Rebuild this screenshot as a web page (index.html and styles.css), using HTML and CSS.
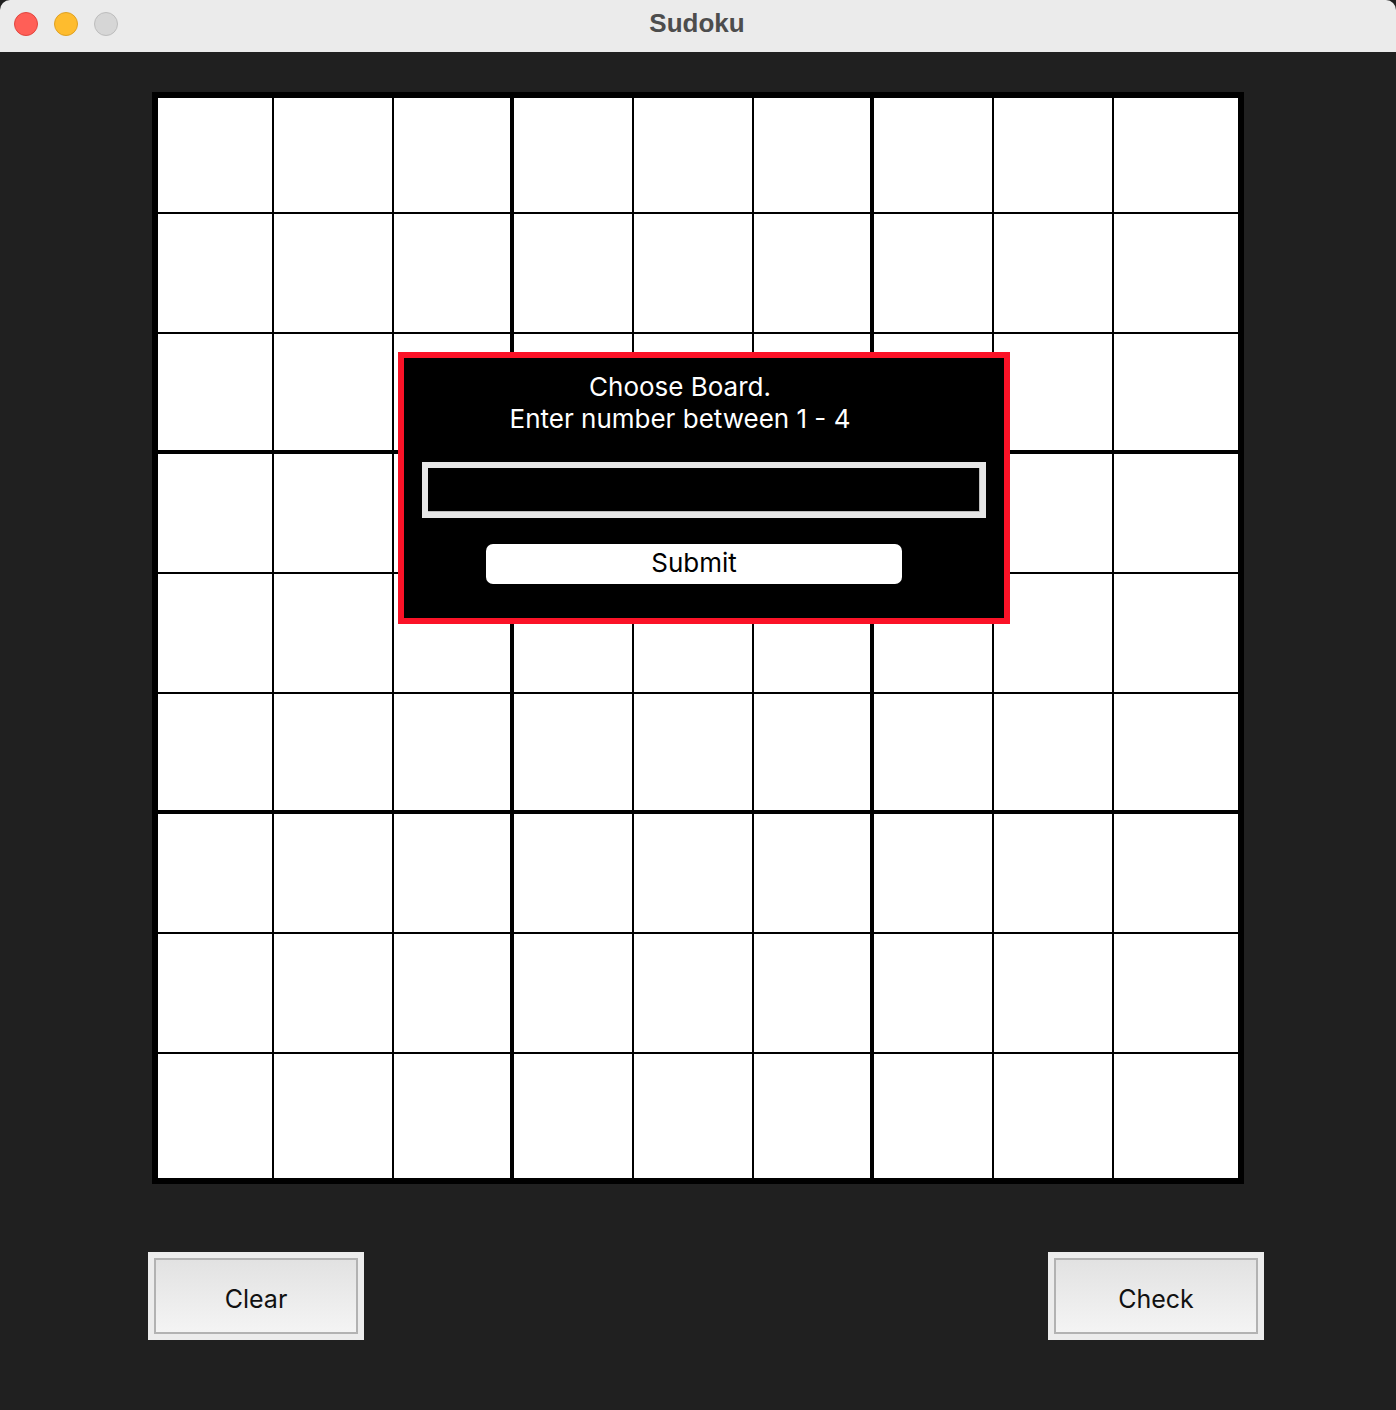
FILE: index.html
```html
<!DOCTYPE html>
<html lang="en">
<head>
<meta charset="utf-8">
<title>Sudoku</title>
<link rel="stylesheet" href="styles.css">
</head>
<body>
<div class="window">
  <header class="titlebar">
    <div class="lights">
      <span class="light red"></span>
      <span class="light yellow"></span>
      <span class="light grey"></span>
    </div>
    <div class="title">Sudoku</div>
    <div class="spacer"></div>
  </header>
  <main class="content">
    <div class="board-wrap">
      <div class="board">
        <div class="cell"></div><div class="cell"></div><div class="cell"></div><div class="cell"></div><div class="cell"></div><div class="cell"></div><div class="cell"></div><div class="cell"></div><div class="cell"></div>
        <div class="cell"></div><div class="cell"></div><div class="cell"></div><div class="cell"></div><div class="cell"></div><div class="cell"></div><div class="cell"></div><div class="cell"></div><div class="cell"></div>
        <div class="cell"></div><div class="cell"></div><div class="cell"></div><div class="cell"></div><div class="cell"></div><div class="cell"></div><div class="cell"></div><div class="cell"></div><div class="cell"></div>
        <div class="cell"></div><div class="cell"></div><div class="cell"></div><div class="cell"></div><div class="cell"></div><div class="cell"></div><div class="cell"></div><div class="cell"></div><div class="cell"></div>
        <div class="cell"></div><div class="cell"></div><div class="cell"></div><div class="cell"></div><div class="cell"></div><div class="cell"></div><div class="cell"></div><div class="cell"></div><div class="cell"></div>
        <div class="cell"></div><div class="cell"></div><div class="cell"></div><div class="cell"></div><div class="cell"></div><div class="cell"></div><div class="cell"></div><div class="cell"></div><div class="cell"></div>
        <div class="cell"></div><div class="cell"></div><div class="cell"></div><div class="cell"></div><div class="cell"></div><div class="cell"></div><div class="cell"></div><div class="cell"></div><div class="cell"></div>
        <div class="cell"></div><div class="cell"></div><div class="cell"></div><div class="cell"></div><div class="cell"></div><div class="cell"></div><div class="cell"></div><div class="cell"></div><div class="cell"></div>
        <div class="cell"></div><div class="cell"></div><div class="cell"></div><div class="cell"></div><div class="cell"></div><div class="cell"></div><div class="cell"></div><div class="cell"></div><div class="cell"></div>
      </div>
      <div class="dialog">
        <div class="dialog-text">Choose Board.<br>Enter number between 1 - 4</div>
        <div class="dialog-input"></div>
        <button class="submit">Submit</button>
      </div>
    </div>
    <div class="actions">
      <div class="btn-frame"><button class="btn">Clear</button></div>
      <div class="btn-frame"><button class="btn">Check</button></div>
    </div>
  </main>
</div>
</body>
</html>
```

FILE: styles.css
```css
* { box-sizing: border-box; }
html, body {
  margin: 0;
  padding: 0;
  background: #202020;
}
body {
  font-family: "Inter", "Liberation Sans", sans-serif;
}
.window {
  width: 1396px;
  min-height: 1410px;
  background: #202020;
}
.titlebar {
  height: 52px;
  background: #ebebeb;
  border-top-left-radius: 10px;
  border-top-right-radius: 10px;
  display: grid;
  grid-template-columns: 1fr auto 1fr;
  align-items: center;
}
.lights {
  display: flex;
  gap: 16px;
  padding-left: 14px;
  align-self: center;
  margin-top: -5px;
}
.light {
  width: 24px;
  height: 24px;
  border-radius: 50%;
  display: block;
}
.light.red { background: #ff5f57; border: 1px solid #e1463f; }
.light.yellow { background: #febc2e; border: 1px solid #dfa123; }
.light.grey { background: #d6d6d6; border: 1px solid #bdbdbd; }
.title {
  font-family: "Liberation Sans", "Inter", sans-serif;
  font-weight: bold;
  font-size: 26px;
  color: #4d4d4d;
  margin-top: -6px;
  margin-left: -2px;
}
.content {
  padding-top: 40px;
}
.board-wrap {
  position: relative;
  margin-left: 152px;
  width: 1092px;
}
.board {
  display: grid;
  grid-template-columns: 114px repeat(7, 118px) 124px;
  grid-template-rows: 114px repeat(7, 118px) 124px;
  gap: 2px;
  background: #000;
  border: 6px solid #000;
  width: 1092px;
  height: 1092px;
}
.cell {
  background: #fff;
}
.cell:nth-child(9n+3),
.cell:nth-child(9n+6) {
  margin-right: 2px;
}
.cell:nth-child(n+19):nth-child(-n+27),
.cell:nth-child(n+46):nth-child(-n+54) {
  margin-bottom: 2px;
}
.dialog {
  position: absolute;
  left: 246px;
  top: 260px;
  width: 612px;
  height: 272px;
  border: 6px solid #fb1227;
  background: #000;
  display: flex;
  flex-direction: column;
  align-items: flex-start;
  padding-top: 13px;
}
.dialog-text {
  width: 100%;
  padding-right: 48px;
  text-align: center;
  color: #fff;
  font-size: 26px;
  line-height: 32px;
}
.dialog-input {
  margin: 27px 18px 0 18px;
  width: 564px;
  height: 56px;
  border: 6px solid #e7e7e7;
  background: #000;
  box-shadow: inset -1px -1px 0 #bdbdbd;
}
.submit {
  margin: 26px 0 0 82px;
  width: 416px;
  height: 40px;
  border: none;
  border-radius: 7px;
  background: #fff;
  color: #000;
  font-family: "Inter", "Liberation Sans", sans-serif;
  font-size: 26px;
  padding: 0 0 2px 0;
  line-height: 38px;
}
.actions {
  margin-top: 68px;
  padding: 0 132px 0 148px;
  display: flex;
  justify-content: space-between;
}
.btn-frame {
  width: 216px;
  height: 88px;
  background: #ececec;
  padding: 6px;
}
.btn {
  display: block;
  width: 100%;
  height: 100%;
  border: 2px solid #b2b2b2;
  background: linear-gradient(#e2e2e2, #f4f4f4);
  color: #111;
  font-family: "Inter", "Liberation Sans", sans-serif;
  font-size: 25px;
  padding: 6px 0 0 0;
  margin: 0;
}
```
